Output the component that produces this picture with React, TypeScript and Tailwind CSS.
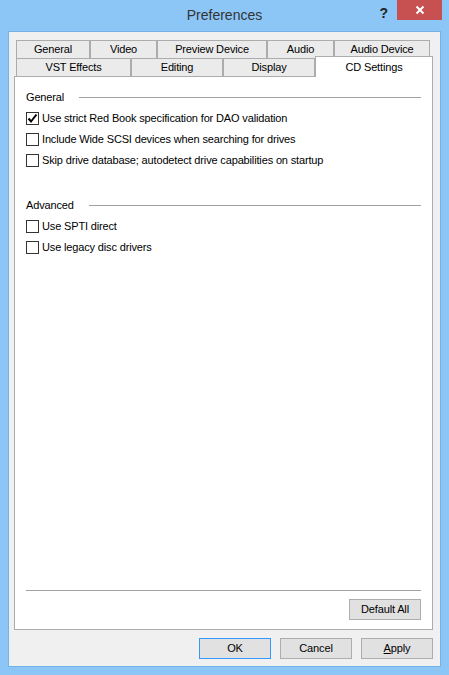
import React from "react";

const font = { fontFamily: '"Liberation Sans", Arial, sans-serif' };

const row1 = [
  { label: "General", w: "w-[74px]" },
  { label: "Video", w: "w-[67px]" },
  { label: "Preview Device", w: "w-[110px]" },
  { label: "Audio", w: "w-[67px]" },
  { label: "Audio Device", w: "w-[96px]" },
];

const row2 = [
  { label: "VST Effects", w: "w-[115px]" },
  { label: "Editing", w: "w-[92px]" },
  { label: "Display", w: "w-[92px]" },
];

function Check({ label, checked }: { label: string; checked?: boolean }) {
  return (
    <div className="flex h-[21px] items-center gap-[3px]">
      <div className="flex h-[13px] w-[13px] items-center justify-center border border-[#333333] bg-white">
        {checked && (
          <svg width="11" height="11" viewBox="0 0 11 11">
            <path d="M1.5 5.5 L4 8.5 L9.5 1.5" fill="none" stroke="#000" strokeWidth="2" />
          </svg>
        )}
      </div>
      <span>{label}</span>
    </div>
  );
}

function GroupHeader({ label }: { label: string }) {
  return (
    <div className="flex h-[22px] items-center gap-[15px]">
      <span>{label}</span>
      <div className="h-px flex-1 bg-[#a0a0a0]" />
    </div>
  );
}

function Btn({ label, primary }: { label: React.ReactNode; primary?: boolean }) {
  return (
    <div
      className={`flex h-[21px] w-[72px] items-center justify-center border bg-[#e1e1e1] ${
        primary ? "border-[#3399ff]" : "border-[#adadad]"
      }`}
    >
      {label}
    </div>
  );
}

export default function App() {
  return (
    <div
      className="flex h-[675px] w-[449px] flex-col bg-[#8cc6f7] text-[11px] tracking-[-0.15px] text-black"
      style={font}
    >
      {/* Title bar */}
      <div className="relative flex h-[31px] items-start justify-end pr-[7px]">
        <div className="absolute inset-x-0 top-[5px] text-center text-[14px] tracking-normal text-[#333333]">
          Preferences
        </div>
        <div className="mr-[9px] mt-[3px] text-[14px] font-bold text-[#222]">?</div>
        <div className="flex h-[20px] w-[45px] items-center justify-center bg-[#c75050]">
          <svg width="10" height="10" viewBox="0 0 10 10">
            <path d="M1.5 1.5 L8.5 8.5 M8.5 1.5 L1.5 8.5" stroke="#fff" strokeWidth="2" />
          </svg>
        </div>
      </div>

      {/* Client area */}
      <div className="mx-[8px] flex h-[636px] flex-col border border-[#74b2e8] bg-[#f0f0f0] pl-[5px] pt-[8px]">
        {/* Tabs */}
        <div className="flex h-[18px] pl-[2px]">
          {row1.map((t) => (
            <div
              key={t.label}
              className={`flex ${t.w} items-center justify-center border border-b-0 border-[#acacac] bg-[#ebebeb]`}
            >
              {t.label}
            </div>
          ))}
        </div>
        <div className="flex h-[18px] items-end pl-[2px]">
          {row2.map((t) => (
            <div
              key={t.label}
              className={`flex h-[18px] ${t.w} items-center justify-center border border-b-0 border-[#acacac] bg-[#ebebeb]`}
            >
              {t.label}
            </div>
          ))}
          <div className="relative z-10 -mb-px flex h-[21px] w-[118px] items-start justify-center border border-b-0 border-[#acacac] bg-white pt-[2px]">
            CD Settings
          </div>
        </div>

        {/* Panel */}
        <div className="flex h-[554px] w-[419px] flex-col border border-[#acacac] bg-white pl-[11px] pr-[11px] pt-[9px] pb-[9px]">
          <GroupHeader label="General" />
          <Check label="Use strict Red Book specification for DAO validation" checked />
          <Check label="Include Wide SCSI devices when searching for drives" />
          <Check label="Skip drive database; autodetect drive capabilities on startup" />
          <div className="h-[23px]" />
          <GroupHeader label="Advanced" />
          <Check label="Use SPTI direct" />
          <Check label="Use legacy disc drivers" />
          <div className="flex-1" />
          <div className="h-px bg-[#a0a0a0]" />
          <div className="mt-[8px] flex justify-end">
            <Btn label="Default All" />
          </div>
        </div>

        {/* Dialog buttons */}
        <div className="mt-[8px] flex w-[419px] justify-end gap-[9px]">
          <Btn label="OK" primary />
          <Btn label="Cancel" />
          <Btn
            label={
              <span>
                <span className="underline">A</span>pply
              </span>
            }
          />
        </div>
      </div>
    </div>
  );
}
